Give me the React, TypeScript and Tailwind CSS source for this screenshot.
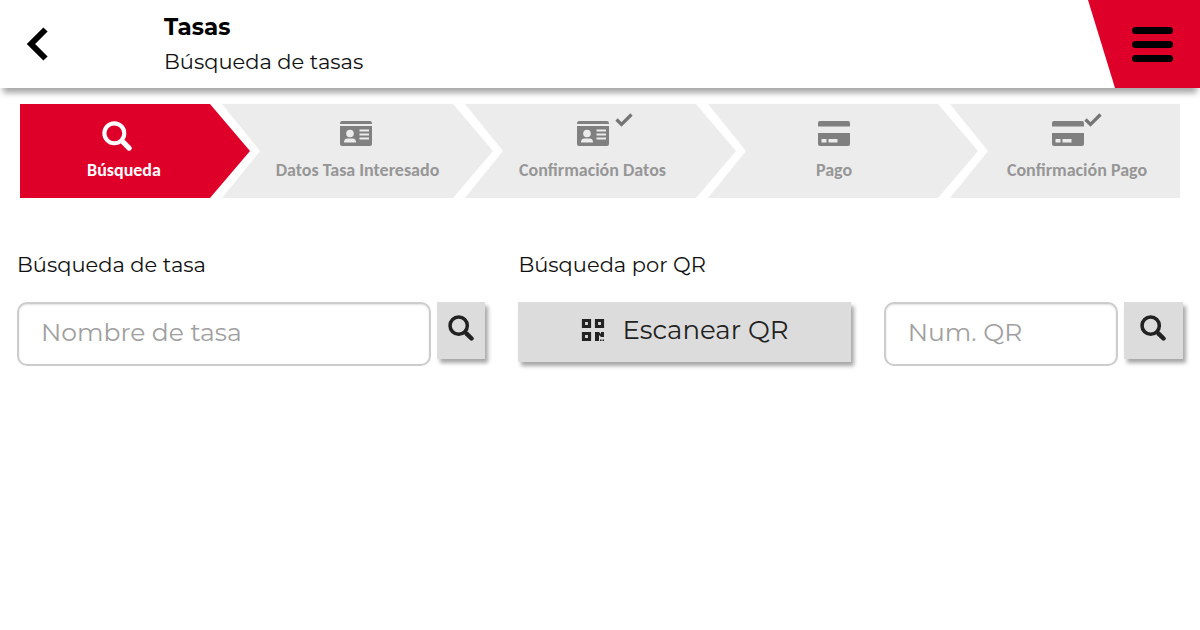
import type { ReactNode } from 'react';

function SearchIcon({ className }: { className: string }) {
  return (
    <svg viewBox="0 0 28 28" className={className} fill="none" stroke="currentColor" aria-hidden="true">
      <circle cx="11.5" cy="11.5" r="9.3" strokeWidth="3.8" />
      <path d="M18 18L19.5 19.5" strokeWidth="3.5" />
      <path d="M20 20L25.3 25.3" strokeWidth="4.8" strokeLinecap="round" />
    </svg>
  );
}

function IdCardIcon() {
  return (
    <svg viewBox="0 0 32 25" className="h-[25px] w-8" aria-hidden="true">
      <path d="M2 0H30Q32 0 32 3H0Q0 0 2 0Z" fill="#808080" />
      <path d="M0 5H32V23Q32 25 30 25H2Q0 25 0 23Z" fill="#808080" />
      <g fill="#ececec">
        <circle cx="10" cy="12.5" r="3.8" />
        <path d="M4 21.5Q4 17.5 7.5 17.5H12.5Q16 17.5 16 21.5Z" />
        <path d="M19.5 8.5H29V10.5H19.5ZM19.5 12.5H29V14.5H19.5ZM19.5 16.5H29V18.5H19.5Z" />
      </g>
    </svg>
  );
}

function CreditCardIcon() {
  return (
    <svg viewBox="0 0 32 25" className="h-[25px] w-8" aria-hidden="true">
      <path d="M2 0H30Q32 0 32 2V5.5H0V2Q0 0 2 0Z" fill="#808080" />
      <path d="M0 12H32V23Q32 25 30 25H2Q0 25 0 23Z" fill="#808080" />
      <path d="M3.5 18H8.5V21.5H3.5ZM10.5 18H19.5V21.5H10.5Z" fill="#ececec" />
    </svg>
  );
}

function CheckIcon({ className }: { className: string }) {
  return (
    <svg viewBox="0 0 18 14" className={className} fill="none" stroke="#757575" strokeWidth="3.2" aria-hidden="true">
      <path d="M1.5 6.5L6.5 11.5L16.5 1.5" />
    </svg>
  );
}

function QrIcon() {
  return (
    <svg viewBox="0 0 24 24" className="size-6 shrink-0" fill="none" stroke="#222" strokeWidth="3.2" aria-hidden="true">
      <path d="M2.5 2.5H8.5V8.5H2.5ZM15.5 2.5H21.5V8.5H15.5ZM2.5 15.5H8.5V21.5H2.5Z" />
      <path
        d="M14 14H18L20 16V14H23V19H20L18 17V23H14ZM19 21.5H20.5V23H19ZM21.5 21.5H23V23H21.5Z"
        fill="#222"
        stroke="none"
      />
    </svg>
  );
}

interface StepProps {
  label: string;
  shape: string;
  current?: boolean;
  children: ReactNode;
}

function Step({ label, shape, current, children }: StepProps) {
  return (
    <li
      aria-current={current ? 'step' : undefined}
      className={`flex h-[94px] flex-col items-center pt-[17px] ${shape} ${
        current ? 'bg-[#df0029] text-white' : 'bg-[#ececec] text-[#969696]'
      }`}
    >
      <div className="flex h-[34px] items-start">{children}</div>
      <span className="mt-[3px] text-lg leading-6 font-bold whitespace-nowrap">{label}</span>
    </li>
  );
}

const MIDDLE =
  '-mr-7 [clip-path:polygon(0_0,calc(100%-40px)_0,100%_50%,calc(100%-40px)_100%,0_100%,38px_50%)]';

const SQUARE_BUTTON =
  'flex h-[57px] shrink-0 justify-center bg-[#dcdcdc] pt-[13px] text-[#222] shadow-[3px_4px_4px_rgba(0,0,0,0.35)]';

const FIELD =
  'h-16 w-full min-w-0 rounded-[10px] border-2 border-[#cccccc] bg-white px-[22px] pb-1 text-[25px] text-[#333] shadow-[inset_0_1px_2px_rgba(0,0,0,0.12)] placeholder:text-[#a0a0a0]';

export default function App() {
  return (
    <div className="min-h-screen bg-white font-['Montserrat','Inter',sans-serif] text-[#111]">
      <header className="flex h-[88px] justify-between bg-white shadow-[0_8px_6px_-3px_rgba(0,0,0,0.35)]">
        <div className="flex">
          <button type="button" aria-label="Volver" className="w-[164px] pl-[26px]">
            <svg viewBox="0 0 22 34" className="h-[34px] w-[22px]" fill="none" stroke="#000" strokeWidth="6" aria-hidden="true">
              <path d="M19.5 2.5L5 17L19.5 31.5" />
            </svg>
          </button>
          <div className="pt-[11px]">
            <h1 className="text-[23px] leading-8 font-bold text-black">Tasas</h1>
            <p className="text-[21px] leading-[38px]">Búsqueda de tasas</p>
          </div>
        </div>
        <button
          type="button"
          aria-label="Menú"
          className="flex w-28 flex-col items-end justify-center gap-[7px] bg-[#df0029] pr-[27px] [clip-path:polygon(0_0,100%_0,100%_100%,27px_100%)]"
        >
          <span className="h-[7px] w-[41px] rounded-sm bg-black" />
          <span className="h-[7px] w-[41px] rounded-sm bg-black" />
          <span className="h-[7px] w-[41px] rounded-sm bg-black" />
        </button>
      </header>

      <ol className="mx-5 mt-4 grid grid-cols-[202fr_243fr_243fr_242fr_230fr] font-['Carlito','Lato',sans-serif]">
        <Step
          label="Búsqueda"
          current
          shape="-mr-7 pr-[22px] [clip-path:polygon(0_0,calc(100%-40px)_0,100%_50%,calc(100%-40px)_100%,0_100%)]"
        >
          <SearchIcon className="mr-3.5 size-[30px]" />
        </Step>
        <Step label="Datos Tasa Interesado" shape={MIDDLE}>
          <div className="pr-1">
            <IdCardIcon />
          </div>
        </Step>
        <Step label="Confirmación Datos" shape={`${MIDDLE} pr-4`}>
          <div className="relative">
            <IdCardIcon />
            <CheckIcon className="absolute -top-2 left-[38px] h-3.5 w-[18px]" />
          </div>
        </Step>
        <Step label="Pago" shape={`${MIDDLE} pr-[18px]`}>
          <CreditCardIcon />
        </Step>
        <Step label="Confirmación Pago" shape="pl-6 [clip-path:polygon(0_0,100%_0,100%_100%,0_100%,38px_50%)]">
          <CreditCardIcon />
          <CheckIcon className="-mt-2 h-3.5 w-[18px]" />
        </Step>
      </ol>

      <main className="grid grid-cols-[468fr_664fr] gap-x-[33px] px-[17px] pt-[51px]">
        <form>
          <label htmlFor="tasa" className="block text-[21px] leading-8">
            Búsqueda de tasa
          </label>
          <div className="mt-[21px] flex gap-1.5">
            <input id="tasa" type="text" placeholder="Nombre de tasa" className={FIELD} />
            <button type="button" aria-label="Buscar tasa" className={`${SQUARE_BUTTON} w-12`}>
              <SearchIcon className="size-[26px]" />
            </button>
          </div>
        </form>
        <form>
          <label htmlFor="qr" className="block text-[21px] leading-8">
            Búsqueda por QR
          </label>
          <div className="mt-[21px] grid grid-cols-[minmax(0,332fr)_minmax(0,299fr)] gap-[33px]">
            <button
              type="button"
              className="flex h-[60px] items-center justify-center gap-[18px] bg-[#dcdcdc] pb-1 text-[26px] whitespace-nowrap text-[#222] shadow-[3px_4px_4px_rgba(0,0,0,0.35)]"
            >
              <QrIcon />
              Escanear QR
            </button>
            <div className="flex gap-1.5">
              <input id="qr" type="text" placeholder="Num. QR" className={FIELD} />
              <button type="button" aria-label="Buscar por número de QR" className={`${SQUARE_BUTTON} w-[59px]`}>
                <SearchIcon className="size-[26px]" />
              </button>
            </div>
          </div>
        </form>
      </main>
    </div>
  );
}
